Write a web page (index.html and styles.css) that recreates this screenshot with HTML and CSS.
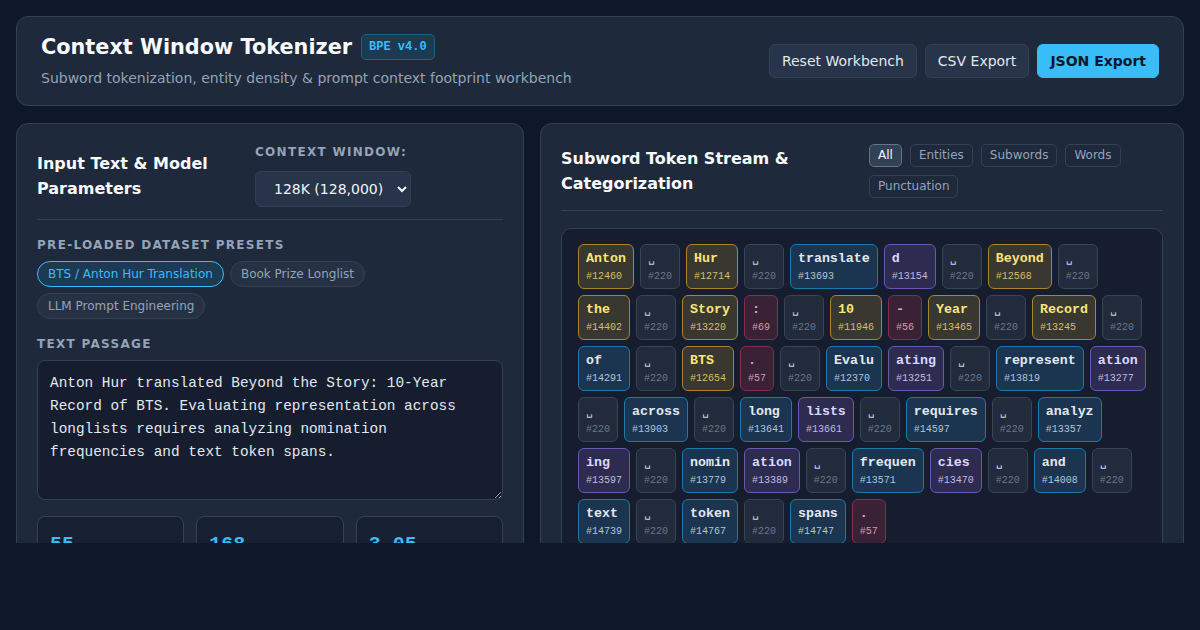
FILE: index.html
```html
<!DOCTYPE html>
<html lang="en">
<head>
    <meta charset="UTF-8">
    <meta name="viewport" content="width=device-width, initial-scale=1.0">
    <title>Context Window Tokenizer</title>
    <link rel="stylesheet" href="styles.css">
</head>
<body>
    <header class="topbar">
        <div class="brand">
            <h1 class="app-title">Context Window Tokenizer <span class="version-badge">BPE v4.0</span></h1>
            <p class="app-subtitle">Subword tokenization, entity density &amp; prompt context footprint workbench</p>
        </div>
        <div class="actions">
            <button class="btn">Reset Workbench</button>
            <button class="btn">CSV Export</button>
            <button class="btn btn-primary">JSON Export</button>
        </div>
    </header>

    <main class="workspace">
        <section class="panel">
            <div class="panel-head">
                <h2 class="panel-title">Input Text &amp; Model Parameters</h2>
                <div class="window-ctl">
                    <label class="field-label" for="ctx">Context Window:</label>
                    <select id="ctx" class="ctx-select">
                        <option>8K (8,192)</option>
                        <option>32K (32,768)</option>
                        <option selected>128K (128,000)</option>
                        <option>200K (200,000)</option>
                    </select>
                </div>
            </div>

            <div class="field-label">Pre-loaded Dataset Presets</div>
            <div class="presets">
                <button class="chip active">BTS / Anton Hur Translation</button>
                <button class="chip">Book Prize Longlist</button>
                <button class="chip">LLM Prompt Engineering</button>
            </div>

            <label class="field-label passage-label" for="passage">Text Passage</label>
            <textarea id="passage" class="passage" spellcheck="false">Anton Hur translated Beyond the Story: 10-Year Record of BTS. Evaluating representation across longlists requires analyzing nomination frequencies and text token spans.</textarea>

            <div class="stats">
                <div class="stat"><div class="stat-value" id="stat-tokens">55</div><div class="stat-label">Tokens</div></div>
                <div class="stat"><div class="stat-value" id="stat-chars">168</div><div class="stat-label">Characters</div></div>
                <div class="stat"><div class="stat-value" id="stat-ratio">3.05</div><div class="stat-label">Chars / Token</div></div>
            </div>
        </section>

        <section class="panel">
            <div class="panel-head">
                <h2 class="panel-title">Subword Token Stream &amp; Categorization</h2>
                <div class="filters">
                    <button class="tab active">All</button>
                    <button class="tab">Entities</button>
                    <button class="tab">Subwords</button>
                    <button class="tab">Words</button>
                    <button class="tab">Punctuation</button>
                </div>
            </div>
            <div class="token-stream" id="stream"></div>
        </section>
    </main>

    <script>
        // token text, vocab id, category
        const stream = [
            ["Anton", 12460, "ent"], [" ", 220, "sp"], ["Hur", 12714, "ent"], [" ", 220, "sp"],
            ["translate", 13693, "word"], ["d", 13154, "sub"], [" ", 220, "sp"], ["Beyond", 12568, "ent"],
            [" ", 220, "sp"], ["the", 14402, "ent"], [" ", 220, "sp"], ["Story", 13220, "ent"],
            [":", 69, "punct"], [" ", 220, "sp"], ["10", 11946, "ent"], ["-", 56, "punct"],
            ["Year", 13465, "ent"], [" ", 220, "sp"], ["Record", 13245, "ent"], [" ", 220, "sp"],
            ["of", 14291, "word"], [" ", 220, "sp"], ["BTS", 12654, "ent"], [".", 57, "punct"],
            [" ", 220, "sp"], ["Evalu", 12370, "word"], ["ating", 13251, "sub"], [" ", 220, "sp"],
            ["represent", 13819, "word"], ["ation", 13277, "sub"], [" ", 220, "sp"], ["across", 13903, "word"],
            [" ", 220, "sp"], ["long", 13641, "word"], ["lists", 13661, "sub"], [" ", 220, "sp"],
            ["requires", 14597, "word"], [" ", 220, "sp"], ["analyz", 13357, "word"], ["ing", 13597, "sub"],
            [" ", 220, "sp"], ["nomin", 13779, "word"], ["ation", 13389, "sub"], [" ", 220, "sp"],
            ["frequen", 13571, "word"], ["cies", 13470, "sub"], [" ", 220, "sp"], ["and", 14008, "word"],
            [" ", 220, "sp"], ["text", 14739, "word"], [" ", 220, "sp"], ["token", 14767, "word"],
            [" ", 220, "sp"], ["spans", 14747, "word"], [".", 57, "punct"]
        ];

        const box = document.getElementById("stream");
        stream.forEach(function (t) {
            let el = document.createElement("div");
            el.className = "tok tok-" + t[2];
            let w = document.createElement("span");
            w.className = "tok-text";
            w.textContent = t[2] === "sp" ? "\u2423" : t[0];
            let id = document.createElement("span");
            id.className = "tok-id";
            id.textContent = "#" + t[1];
            el.appendChild(w);
            el.appendChild(id);
            box.appendChild(el);
        });
    </script>
</body>
</html>
```

FILE: styles.css
```css
* {
    box-sizing: border-box;
}
body {
    margin: 0;
    padding: 16px;
    background: #0f172a;
    color: #e2e8f0;
    font-family: "DejaVu Sans", "Noto Sans", sans-serif;
}
button, select, textarea {
    font-family: inherit;
}

/* top bar */
.topbar {
    display: flex;
    justify-content: space-between;
    align-items: center;
    background: #1e293b;
    border: 1px solid #334155;
    border-radius: 12px;
    padding: 17px 24px;
}
.app-title {
    margin: 0;
    display: flex;
    align-items: center;
    gap: 9px;
    font-size: 20.8px;
    line-height: 26px;
    color: #f8fafc;
}
.version-badge {
    font-family: "Liberation Mono", monospace;
    font-size: 12px;
    line-height: 16px;
    font-weight: bold;
    color: #38bdf8;
    background: #1d3a53;
    border: 1px solid #1f5f86;
    border-radius: 5px;
    padding: 4px 7px;
}
.app-subtitle {
    margin: 8px 0 0;
    font-size: 14px;
    line-height: 20px;
    color: #94a3b8;
}
.actions {
    display: flex;
    gap: 8px;
}
.btn {
    height: 34px;
    padding: 0 12px;
    font-size: 14px;
    color: #e2e8f0;
    background: #273449;
    border: 1px solid #334155;
    border-radius: 6px;
    cursor: pointer;
}
.btn-primary {
    background: #38bdf8;
    border-color: #38bdf8;
    color: #0f172a;
    font-weight: bold;
}

/* two columns, page is clipped to the viewport band */
.workspace {
    display: grid;
    grid-template-columns: 508px 1fr;
    gap: 16px;
    margin-top: 17px;
    height: 420px;
    overflow: hidden;
    align-items: start;
}
.panel {
    background: #1e293b;
    border: 1px solid #334155;
    border-radius: 12px;
    padding: 20px;
}
.panel-head {
    display: flex;
    align-items: center;
    gap: 20px;
    padding-bottom: 12px;
    border-bottom: 1px solid #334155;
    margin-bottom: 17px;
}
.panel-title {
    flex: 1;
    margin: 0;
    font-size: 16px;
    line-height: 25px;
    color: #f8fafc;
}
.window-ctl {
    flex: 0 0 248px;
}
.field-label {
    display: block;
    font-size: 12px;
    line-height: 16px;
    font-weight: bold;
    letter-spacing: 1.3px;
    text-transform: uppercase;
    color: #94a3b8;
    margin-bottom: 8px;
}
.window-ctl .field-label {
    margin-bottom: 11px;
}
.ctx-select {
    color-scheme: dark;
    width: 156px;
    height: 36px;
    padding: 0 8px 0 14px;
    font-size: 14px;
    color: #f1f5f9;
    background: #273449;
    border: 1px solid #334155;
    border-radius: 6px;
}

.presets {
    display: flex;
    flex-wrap: wrap;
    gap: 6px;
}
.chip {
    font-size: 12px;
    line-height: 24px;
    padding: 0 10px;
    color: #94a3b8;
    background: #263244;
    border: 1px solid #334155;
    border-radius: 999px;
    cursor: pointer;
}
.chip.active {
    color: #38bdf8;
    background: #1d3a53;
    border-color: #38bdf8;
}
.passage-label {
    margin-top: 17px;
}
.passage {
    color-scheme: dark;
    display: block;
    width: 100%;
    height: 140px;
    padding: 11px 12px;
    font-family: "Liberation Mono", monospace;
    font-size: 14.4px;
    line-height: 23px;
    color: #e2e8f0;
    background: #151d2f;
    border: 1px solid #334155;
    border-radius: 8px;
}
.stats {
    display: grid;
    grid-template-columns: repeat(3, 1fr);
    gap: 12px;
    margin-top: 16px;
}
.stat {
    background: #172033;
    border: 1px solid #334155;
    border-radius: 8px;
    padding: 16px 12px;
}
.stat-value {
    font-family: "Liberation Mono", monospace;
    font-size: 20px;
    line-height: 24px;
    font-weight: bold;
    color: #38bdf8;
}
.stat-label {
    font-size: 12px;
    color: #94a3b8;
    margin-top: 4px;
}

/* filter tabs */
.filters {
    flex: 0 0 294px;
    display: flex;
    flex-wrap: wrap;
    gap: 8px;
}
.tab {
    font-size: 12px;
    line-height: 21px;
    padding: 0 8px;
    color: #94a3b8;
    background: transparent;
    border: 1px solid #334155;
    border-radius: 5px;
    cursor: pointer;
}
.tab.active {
    color: #f8fafc;
    background: #334155;
    border-color: #64748b;
}

/* token stream */
.token-stream {
    display: flex;
    flex-wrap: wrap;
    align-content: flex-start;
    gap: 6px;
    padding: 15px 16px;
    background: #151d2f;
    border: 1px solid #334155;
    border-radius: 10px;
}
.tok {
    display: flex;
    flex-direction: column;
    padding: 5px 7px;
    border: 1px solid;
    border-radius: 6px;
    font-family: "Liberation Mono", "DejaVu Sans Mono", monospace;
}
.tok-text {
    font-size: 13.3px;
    line-height: 18px;
    font-weight: bold;
    white-space: pre;
}
.tok-id {
    font-size: 10px;
    line-height: 13px;
    margin-top: 2px;
}
.tok-ent {
    background: #393830;
    border-color: #a9852b;
    color: #fce47c;
}
.tok-ent .tok-id { color: #d4be6a; }
.tok-word {
    background: #1b3550;
    border-color: #1b7aa8;
    color: #e2e8f0;
}
.tok-word .tok-id { color: #b4c4d4; }
.tok-sub {
    background: #2d2c50;
    border-color: #6a57b3;
    color: #ddd6fe;
}
.tok-sub .tok-id { color: #c2badf; }
.tok-punct {
    background: #392236;
    border-color: #8a2c4a;
    color: #f5a3bd;
}
.tok-punct .tok-id { color: #d39bb0; }
.tok-sp {
    background: #212b3c;
    border-color: #384457;
    color: #cbd5e1;
}
.tok-sp .tok-text {
    font-family: "DejaVu Sans Mono", monospace;
    font-size: 11px;
    font-weight: normal;
}
.tok-sp .tok-id { color: #6b7789; }
```
